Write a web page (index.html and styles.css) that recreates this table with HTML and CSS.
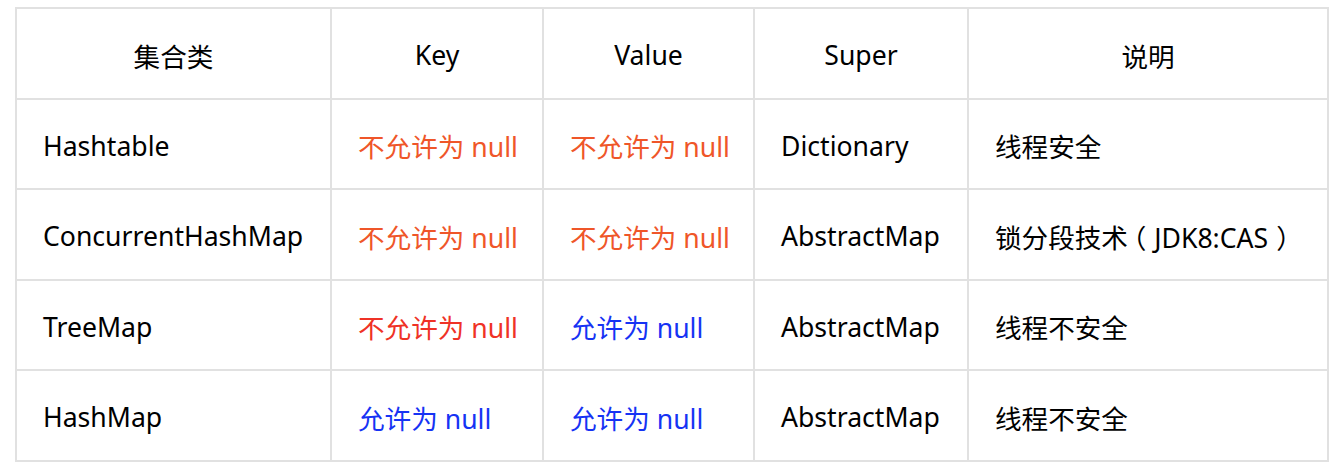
FILE: index.html
```html
<!DOCTYPE html>
<html lang="zh-CN">
<head>
<meta charset="utf-8">
<title>集合类对比</title>
<link rel="stylesheet" href="styles.css">
</head>
<body>
<table class="cmp">
  <colgroup>
    <col class="c1"><col class="c2"><col class="c3"><col class="c4"><col class="c5">
  </colgroup>
  <thead>
    <tr class="r-odd">
      <th>集合类</th><th>Key</th><th>Value</th><th>Super</th><th>说明</th>
    </tr>
  </thead>
  <tbody>
    <tr class="r-even">
      <td>Hashtable</td>
      <td class="orange">不允许为 null</td>
      <td class="orange">不允许为 null</td>
      <td>Dictionary</td>
      <td>线程安全</td>
    </tr>
    <tr class="r-odd">
      <td>ConcurrentHashMap</td>
      <td class="orange">不允许为 null</td>
      <td class="orange">不允许为 null</td>
      <td>AbstractMap</td>
      <td>锁分段技术<span class="lp">（</span>JDK8:CAS<span class="rp">）</span></td>
    </tr>
    <tr class="r-even">
      <td>TreeMap</td>
      <td class="red">不允许为 null</td>
      <td class="blue">允许为 null</td>
      <td>AbstractMap</td>
      <td>线程不安全</td>
    </tr>
    <tr class="r-odd">
      <td>HashMap</td>
      <td class="blue">允许为 null</td>
      <td class="blue">允许为 null</td>
      <td>AbstractMap</td>
      <td>线程不安全</td>
    </tr>
  </tbody>
</table>
</body>
</html>
```
FILE: styles.css
```css
html, body {
  margin: 0;
  padding: 0;
  background: #ffffff;
}
body {
  padding: 7px 0 0 15px;
  font-family: "Noto Sans", "Noto Sans CJK SC", sans-serif;
  font-size: 26.6px;
  color: #000000;
}
.cmp {
  border-collapse: collapse;
  table-layout: fixed;
  width: 1312px;
}
.c1 { width: 315px; }
.c2 { width: 212px; }
.c3 { width: 211px; }
.c4 { width: 214px; }
.c5 { width: 360px; }
.cmp th, .cmp td {
  border: 2px solid #e1e1e1;
  padding: 3px 0 0 26px;
  text-align: left;
  vertical-align: middle;
  white-space: nowrap;
  font-weight: normal;
}
.cmp th {
  text-align: center;
  padding: 3px 0 0 0;
}
.r-odd { height: 91px; }
.r-even { height: 90px; }
.lp, .rp {
  font-family: "Noto Sans CJK SC", sans-serif;
  font-feature-settings: "halt" 1;
}
.lp { padding: 0 8px 0 5px; }
.rp { padding: 0 0 0 8px; }
.orange { color: #ef5629; }
.red { color: #ef3226; }
.blue { color: #1633f4; }
```
